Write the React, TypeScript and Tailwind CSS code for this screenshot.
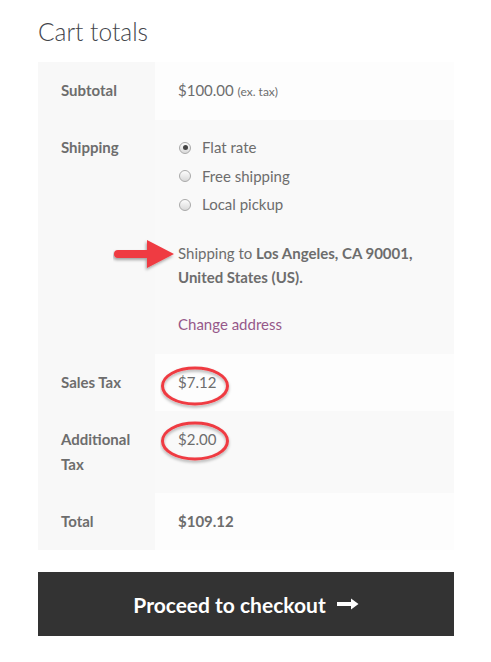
import React from 'react';

const font = { fontFamily: 'Lato, "Noto Sans", sans-serif' };

function Radio({checked}: {checked?: boolean}) {
  return (
    <span className="relative inline-flex w-[12px] h-[12px] rounded-full border border-[#a9a9a9] bg-gradient-to-b from-[#fdfdfd] to-[#d9d9d9] items-center justify-center shrink-0">
      {checked && <span className="w-[5px] h-[5px] rounded-full bg-[#444]" />}
    </span>
  );
}

function Circle() {
  return (
    <svg width="72" height="46" viewBox="0 0 72 46" className="absolute pointer-events-none">
      <defs>
        <filter id="sh" x="-20%" y="-20%" width="140%" height="160%">
          <feDropShadow dx="0" dy="2" stdDeviation="1.5" floodColor="#000" floodOpacity="0.3" />
        </filter>
      </defs>
      <ellipse cx="35" cy="21" rx="32.5" ry="18" fill="none" stroke="#ef3b42" strokeWidth="3" filter="url(#sh)" />
    </svg>
  );
}

function Row({label, children, alt}: {label: React.ReactNode; children: React.ReactNode; alt?: boolean}) {
  return (
    <div className="flex">
      <div className="w-[117px] shrink-0 bg-[#f8f8f8] pl-[23px] py-4 font-bold">{label}</div>
      <div className={`flex-1 pl-[23px] py-4 relative ${alt ? 'bg-[#f9f9f9]' : 'bg-[#fdfdfd]'}`}>{children}</div>
    </div>
  );
}

export default function App() {
  return (
    <div className="bg-white min-h-[662px] w-[491px] text-[15px] leading-[25px] text-[#6d6d6d]" style={font}>
      <div className="ml-[38px] w-[416px] pt-4">
        <h2 className="text-[24.5px] leading-[32px] font-light text-[#43454b] mb-[14px]">Cart totals</h2>

        <div className="flex flex-col">
          <Row label="Subtotal">
            $100.00 <span className="text-[12px]">(ex. tax)</span>
          </Row>

          <div className="flex relative">
            <div className="w-[117px] shrink-0 bg-[#f8f8f8] pl-[23px] pt-[15px] pb-4 font-bold">Shipping</div>
            <div className="flex-1 pl-[23px] pt-[15px] pb-[18px] bg-[#f9f9f9]">
              <ul className="flex flex-col gap-[3.5px]">
                <li className="flex items-center"><span className="ml-[1px] mr-[11px] flex"><Radio checked /></span>Flat rate</li>
                <li className="flex items-center"><span className="ml-[1px] mr-[11px] flex"><Radio /></span>Free shipping</li>
                <li className="flex items-center"><span className="ml-[1px] mr-[11px] flex"><Radio /></span>Local pickup</li>
              </ul>
              <p className="mt-[24px] leading-[24px]">
                Shipping to <strong>Los Angeles, CA 90001,</strong><br />
                <strong>United States (US).</strong>
              </p>
              <a className="block mt-[23px] leading-[24px] text-[#96588a]">Change address</a>
            </div>
            <svg width="66" height="34" viewBox="0 0 66 34" className="absolute left-[75px] top-[119px] pointer-events-none">
              <defs>
                <filter id="ash" x="-20%" y="-30%" width="140%" height="170%">
                  <feDropShadow dx="-1" dy="2" stdDeviation="1.5" floodColor="#000" floodOpacity="0.35" />
                </filter>
              </defs>
              <path d="M5 11 L34 11 L34 1 L61 15 L34 29 L34 19 L5 19 A4 4 0 0 1 5 11 Z" fill="#ef3b42" filter="url(#ash)" />
            </svg>
          </div>

          <Row label="Sales Tax">
            <span className="absolute left-[5px] top-[11px]"><Circle /></span>
            $7.12
          </Row>

          <Row label={<>Additional<br />Tax</>} alt>
            <span className="absolute left-[5px] top-[9px]"><Circle /></span>
            $2.00
          </Row>

          <Row label="Total">
            <strong>$109.12</strong>
          </Row>
        </div>

        <button className="mt-[22px] w-full h-[64px] bg-[#333333] text-white font-bold text-[21px] flex items-center justify-center gap-[11px]">
          Proceed to checkout
          <svg width="22" height="12" viewBox="0 0 22 12">
            <path d="M0 4 H14 V0.5 L21.5 6 L14 11.5 V8 H0 Z" fill="#fff" />
          </svg>
        </button>
      </div>
    </div>
  );
}
